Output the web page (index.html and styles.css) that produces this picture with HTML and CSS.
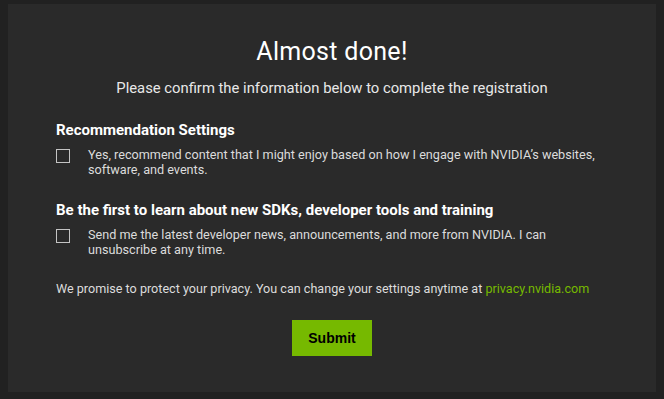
FILE: index.html
```html
<!DOCTYPE html>
<html lang="en">
<head>
    <meta charset="UTF-8">
    <meta name="viewport" content="width=device-width, initial-scale=1.0">
    <title>Almost done!</title>
    <link rel="stylesheet" href="styles.css">
</head>
<body>
    <div class="panel">
        <h1 class="title">Almost done!</h1>
        <p class="subtitle">Please confirm the information below to complete the registration</p>

        <!-- Recommendation opt-in -->
        <div class="section">
            <h2 class="section-title">Recommendation Settings</h2>
            <label class="check-row">
                <input type="checkbox" class="check">
                <span>Yes, recommend content that I might enjoy based on how I engage with NVIDIA’s websites, software, and events.</span>
            </label>
        </div>

        <!-- Developer newsletter opt-in -->
        <div class="section">
            <h2 class="section-title">Be the first to learn about new SDKs, developer tools and training</h2>
            <label class="check-row">
                <input type="checkbox" class="check">
                <span>Send me the latest developer news, announcements, and more from NVIDIA. I can unsubscribe at any time.</span>
            </label>
        </div>

        <p class="privacy">We promise to protect your privacy. You can change your settings anytime at <a href="#">privacy.nvidia.com</a></p>

        <div class="actions">
            <button class="submit" type="button">Submit</button>
        </div>
    </div>
</body>
</html>
```

FILE: styles.css
```css
* {
    margin: 0;
    padding: 0;
    box-sizing: border-box;
}

body {
    background: #212121;
    font-family: Roboto, 'Liberation Sans', sans-serif;
    color: #dcdcdc;
    padding: 4px 8px 7px;
}

.panel {
    background: #2a2a2a;
    padding: 33px 48px 36px;
    min-height: 388px;
}

.title {
    text-align: center;
    font-size: 25px;
    line-height: 30px;
    font-weight: 400;
    letter-spacing: 0.3px;
    color: #fff;
}

.subtitle {
    text-align: center;
    font-size: 14.8px;
    line-height: 18px;
    margin-top: 12px;
    color: #e8e8e8;
}

.section {
    margin-top: 24px;
}

.section-title {
    font-size: 15px;
    line-height: 18px;
    font-weight: 700;
    color: #fff;
}

.check-row {
    display: flex;
    gap: 18px;
    margin-top: 8px;
    font-size: 12.65px;
    line-height: 15px;
    cursor: pointer;
}

.check {
    appearance: none;
    flex: none;
    width: 14px;
    height: 14px;
    margin-top: 2px;
    border: 1px solid #c4c4c4;
    background: transparent;
}

.privacy {
    margin-top: 24px;
    font-size: 12.6px;
    line-height: 16px;
}

.privacy a {
    color: #76b900;
    text-decoration: none;
}

.actions {
    display: flex;
    justify-content: center;
    margin-top: 23px;
}

.submit {
    width: 80px;
    height: 36px;
    border: none;
    background: #76b900;
    color: #000;
    font-family: Arial, 'Liberation Sans', sans-serif;
    font-size: 14px;
    font-weight: 700;
    cursor: pointer;
}
```
